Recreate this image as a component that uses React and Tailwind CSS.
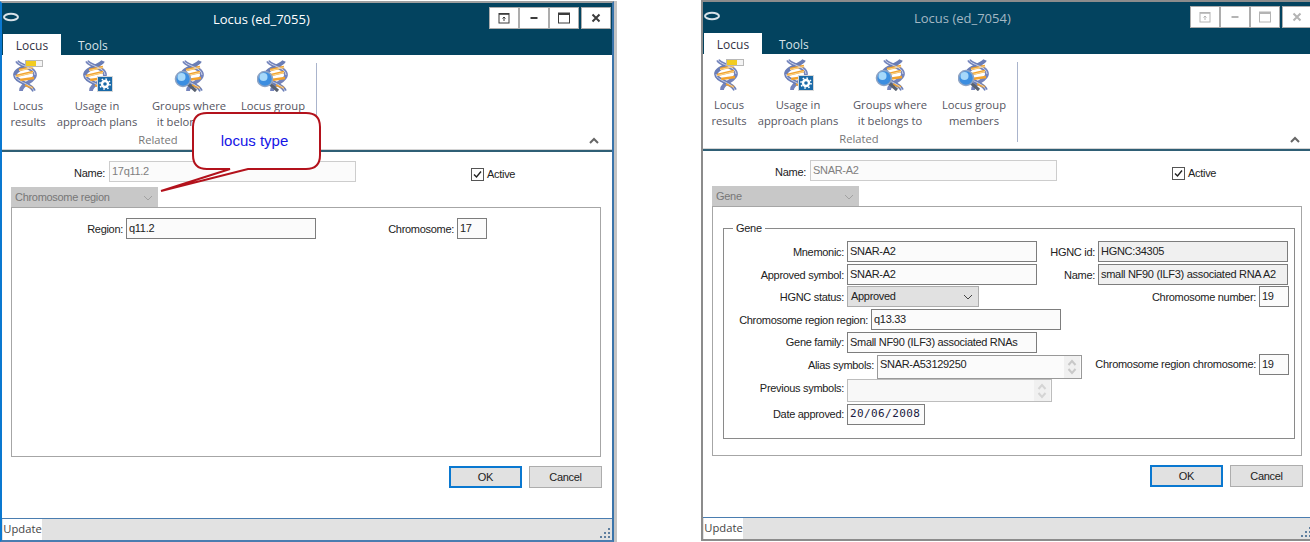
import React from 'react';

const RIBBON_FONT = "font-['Open_Sans',sans-serif]";
const FORM_FONT = "font-['Liberation_Sans',sans-serif] tracking-[-0.3px]";

function Helix({ x = 0 }) {
  return (
    <g transform={`translate(${x} 0)`}>
      <path d="M5 1 C7 6 23 7 23 15 C23 22 9 23 9 31" stroke="#7484bc" strokeWidth="3.8" fill="none" />
      <path d="M21 1 C19 6 3 8 3 15 C3 22 19 23 22 31" stroke="#6a7db6" strokeWidth="3.8" fill="none" />
      <path d="M7 10 L21 7 M4 16 L21 12 M8 20 L22 18 M13 25 L21 28" stroke="#f2a22e" strokeWidth="2.4" fill="none" />
      <path d="M7 10.5 L21 7.5 M4 16.5 L21 12.5" stroke="#fbe4aa" strokeWidth="0.8" fill="none" />
      <path d="M5 1 C7 6 23 7 23 15" stroke="#ccd4ea" strokeWidth="1" fill="none" />
      <path d="M3 15 C3 22 19 23 22 31" stroke="#c6d0e8" strokeWidth="1" fill="none" />
    </g>
  );
}

function Lens({ x }) {
  return (
    <g>
      <path d={`M${x + 5} 24 L${x + 13} 31`} stroke="#5a6270" strokeWidth="3.2" />
      <circle cx={x} cy="19" r="7.5" fill="#3c8ee0" stroke="#8fa4c4" strokeWidth="1.6" />
      <circle cx={x - 1.5} cy="17" r="4" fill="#a6d8fa" />
    </g>
  );
}

function RibbonIcon({ kind }) {
  return (
    <svg width="32" height="32" viewBox="0 0 32 32" className="shrink-0">
      {kind === 'results' && (
        <>
          <Helix x={0} />
          <rect x="13.5" y="0.5" width="17" height="6" fill="#f4f4f4" stroke="#b8b8b8" />
          <rect x="14" y="1" width="10" height="5" fill="#f2cc20" />
        </>
      )}
      {kind === 'usage' && (
        <>
          <Helix x={1} />
          <rect x="16" y="16" width="16" height="16" fill="#d8d8d8" />
          <rect x="17" y="17" width="14" height="14" fill="#1a6aa8" />
          <circle cx="24" cy="24" r="3" fill="none" stroke="#fff" strokeWidth="2.4" />
          <circle cx="24" cy="24" r="5" fill="none" stroke="#fff" strokeWidth="1.6" strokeDasharray="1.6 2.3" />
        </>
      )}
      {kind === 'groups' && (
        <>
          <Helix x={6} />
          <Lens x={10} />
        </>
      )}
      {kind === 'members' && (
        <>
          <Helix x={6} />
          <Lens x={8} />
        </>
      )}
    </svg>
  );
}

function RibbonItem({ kind, lines, w, ml }) {
  return (
    <div className={`flex flex-col items-center ${w} ${ml}`}>
      <RibbonIcon kind={kind} />
      <div className="mt-[6px] text-center leading-[16px] whitespace-nowrap">
        <div>{lines[0]}</div>
        <div>{lines[1]}</div>
      </div>
    </div>
  );
}

function WinButton({ dim, children, ml = '' }) {
  return (
    <div className={`flex h-[22px] w-[30px] items-center justify-center border border-[#adadad] bg-white ${ml} ${dim ? 'text-[#b4b4b4]' : 'text-[#3c3c3c]'}`}>
      <svg width="12" height="12" viewBox="0 0 12 12" fill="none" stroke="currentColor">
        {children}
      </svg>
    </div>
  );
}

function TitleBar({ title, dim }) {
  return (
    <div className="h-[52px] shrink-0 bg-[#03435f]">
      <div className="flex h-[31px]">
        <svg width="16" height="10" viewBox="0 0 16 10" className="mt-[9px] ml-px">
          <ellipse cx="8" cy="5" rx="7" ry="3.2" fill="none" stroke="#d8e2e8" strokeWidth="2" />
        </svg>
        <div className={`ml-[194px] pt-[7px] text-[13px] leading-[18px] whitespace-nowrap ${RIBBON_FONT} ${dim ? 'text-[#a3b8c4]' : 'text-white'}`}>
          {title}
        </div>
        <div className="ml-auto mr-[1px] flex pt-[4px]">
          <WinButton dim={dim}>
            <rect x="1" y="1.5" width="10" height="9.5" />
            <path d="M1 2 H11" strokeWidth="1.6" />
            <path d="M6 9 V5 M4.5 6.5 L6 5 L7.5 6.5" />
          </WinButton>
          <WinButton dim={dim}>
            <path d="M2.5 6 H9.5" strokeWidth="2" />
          </WinButton>
          <WinButton dim={dim}>
            <rect x="0.5" y="1" width="11" height="10" />
            <path d="M0.5 2 H11.5" strokeWidth="2" />
          </WinButton>
          <WinButton dim={dim} ml="ml-[2px]">
            <path d="M2.5 2.5 L9.5 9.5 M9.5 2.5 L2.5 9.5" strokeWidth="2" />
          </WinButton>
        </div>
      </div>
      <div className={`ml-[1px] flex h-[21px] text-[12px] ${RIBBON_FONT}`}>
        <div className="flex w-[58px] items-center justify-center bg-white pt-[2px] text-[#334]">Locus</div>
        <div className="ml-[17px] flex items-center pt-[2px] text-[#d8e2e8]">Tools</div>
      </div>
    </div>
  );
}

function Ribbon() {
  return (
    <div className={`flex h-[95px] shrink-0 border-b border-[#d4d4d4] bg-white text-[11.2px] text-[#55555f] ${RIBBON_FONT}`}>
      <div className="flex w-[314px] flex-col pt-[5px]">
        <div className="flex">
          <RibbonItem kind="results" lines={['Locus', 'results']} w="w-[50px]" ml="ml-px" />
          <RibbonItem kind="usage" lines={['Usage in', 'approach plans']} w="w-[84px]" ml="ml-[2px]" />
          <RibbonItem kind="groups" lines={['Groups where', 'it belongs to']} w="w-[80px]" ml="ml-[10px]" />
          <RibbonItem kind="members" lines={['Locus group', 'members']} w="w-[76px]" ml="ml-[6px]" />
        </div>
        <div className="mt-[2px] w-[312px] text-center leading-[16px] text-[#777]">Related</div>
      </div>
      <div className="mt-[8px] h-[80px] w-px bg-[#aab4cc]" />
      <svg width="10" height="7" viewBox="0 0 10 7" className="mt-auto mb-[5px] ml-auto mr-[13px]">
        <path d="M1 6 L5 2 L9 6" fill="none" stroke="#666" strokeWidth="2" />
      </svg>
    </div>
  );
}

function Field({ w, h = 'h-[21px]', bg = 'bg-[#fbfbfb]', border = 'border-[#7d7d7d]', color = 'text-[#222]', ml = '', children }) {
  return (
    <div className={`flex shrink-0 items-start overflow-hidden border px-[2px] pt-px leading-[16px] whitespace-nowrap ${w} ${h} ${bg} ${border} ${color} ${ml}`}>
      {children}
    </div>
  );
}

function Row({ label, labelW, mt, labelPad = 'pt-px', children }) {
  return (
    <div className={`flex items-center ${mt}`}>
      <div className={`shrink-0 pr-[3px] text-right whitespace-nowrap ${labelW} ${labelPad}`}>{label}</div>
      {children}
    </div>
  );
}

function Spinner({ dim }) {
  const stroke = dim ? '#d4d4d4' : '#c8c8c8';
  return (
    <div className="ml-auto mr-[-1px] mt-[-1px] flex h-[calc(100%+1px)] w-[16px] flex-col items-center justify-center gap-[2px] bg-[#f0f0f0]">
      <svg width="10" height="7" viewBox="0 0 10 7">
        <path d="M1.5 6 L5 2 L8.5 6" fill="none" stroke={stroke} strokeWidth="2" />
      </svg>
      <svg width="10" height="7" viewBox="0 0 10 7">
        <path d="M1.5 1 L5 5 L8.5 1" fill="none" stroke={stroke} strokeWidth="2" />
      </svg>
    </div>
  );
}

function FormHead({ name, typeName }) {
  return (
    <>
      <div className="flex pt-[9px]">
        <div className="w-[104px] pt-[4px] pr-[1px] text-right leading-[16px]">Name:</div>
        <Field w="w-[247px]" border="border-[#cdcdcd]" color="text-[#808080]" ml="ml-[3px]">{name}</Field>
        <div className="ml-[115px] mt-[5px] flex items-center">
          <div className="flex h-[13px] w-[13px] items-center justify-center border border-[#555] bg-white">
            <svg width="11" height="11" viewBox="0 0 11 11">
              <path d="M2 5.5 L4.5 8 L9 2.5" fill="none" stroke="#222" strokeWidth="1.4" />
            </svg>
          </div>
          <span className="ml-[3px] leading-[14px]">Active</span>
        </div>
      </div>
      <div className="ml-[9px] mt-[5px] flex h-[20px] w-[147px] items-center bg-[#c8c8c8] pl-[4px] pr-[4px] pt-px text-[#777]">
        {typeName}
        <svg width="10" height="6" viewBox="0 0 10 6" className="ml-auto mr-[1px]">
          <path d="M1 1 L5 5 L9 1" fill="none" stroke="#a2a2a2" strokeWidth="1" />
        </svg>
      </div>
    </>
  );
}

function Buttons() {
  return (
    <div className="mr-[10px] mt-[9px] flex justify-end">
      <div className="flex h-[22px] w-[73px] items-center justify-center border-2 border-[#0a78d0] bg-[#e1e1e1]">OK</div>
      <div className="ml-[7px] flex h-[22px] w-[73px] items-center justify-center border border-[#adadad] bg-[#e1e1e1]">Cancel</div>
    </div>
  );
}

function StatusBar() {
  return (
    <div className={`flex h-[22px] shrink-0 items-stretch border-t border-[#4a7db0] bg-[#e2e2e2] text-[11.2px] text-[#444] ${RIBBON_FONT}`}>
      <div className="ml-px flex w-[39px] items-center justify-center bg-white">Update</div>
      <svg width="12" height="11" viewBox="0 0 12 11" className="ml-auto mt-auto mb-px mr-px" fill="#5f7f9f">
        <rect x="9" y="0" width="2" height="2" />
        <rect x="5" y="4" width="2" height="2" />
        <rect x="9" y="4" width="2" height="2" />
        <rect x="1" y="8" width="2" height="2" />
        <rect x="5" y="8" width="2" height="2" />
        <rect x="9" y="8" width="2" height="2" />
      </svg>
    </div>
  );
}

function RegionPanel() {
  return (
    <div className="ml-[9px] flex h-[250px] w-[590px] items-start border border-[#a6a6a6] pt-[10px]">
      <div className="w-[114px] pt-[3px] pr-[3px] text-right leading-[16px]">Region:</div>
      <Field w="w-[190px]">q11.2</Field>
      <div className="w-[141px] pt-[3px] pr-[3px] text-right leading-[16px]">Chromosome:</div>
      <Field w="w-[30px]">17</Field>
    </div>
  );
}

function GenePanel() {
  return (
    <div className="ml-[9px] h-[250px] w-[590px] border border-[#a6a6a6] pt-[14px] pl-[10px]">
      <fieldset className="h-[218px] w-[572px] border border-[#8a8a8a]">
        <legend className="ml-[9px] px-[3px] leading-[14px]">Gene</legend>
        <div className="flex justify-between pt-[6px] pr-[5px]">
          {/* the left rows run past this width, under the right column's labels */}
          <div className="flex w-[300px] shrink-0 flex-col">
            <Row label="Mnemonic:" labelW="w-[123px]"><Field w="w-[190px]">SNAR-A2</Field></Row>
            <Row label="Approved symbol:" labelW="w-[123px]" mt="mt-[2px]"><Field w="w-[190px]">SNAR-A2</Field></Row>
            <Row label="HGNC status:" labelW="w-[123px]" mt="mt-px">
              <div className="flex h-[21px] w-[132px] shrink-0 items-center border border-[#adadad] bg-[#e1e1e1] px-[3px]">
                Approved
                <svg width="10" height="6" viewBox="0 0 10 6" className="ml-auto mr-[2px]">
                  <path d="M1 1 L5 5 L9 1" fill="none" stroke="#444" strokeWidth="1" />
                </svg>
              </div>
            </Row>
            <Row label="Chromosome region region:" labelW="w-[147px]" mt="mt-[2px]"><Field w="w-[190px]">q13.33</Field></Row>
            <Row label="Gene family:" labelW="w-[123px]" mt="mt-[2px]" labelPad=""><Field w="w-[190px]">Small NF90 (ILF3) associated RNAs</Field></Row>
            <Row label="Alias symbols:" labelW="w-[153px]" mt="mt-[2px]" labelPad="pb-[3px]">
              <Field w="w-[205px]" h="h-[24px]" border="border-[#999]"><span className="-mt-px">SNAR-A53129250</span><Spinner /></Field>
            </Row>
            <Row label="Previous symbols:" labelW="w-[123px]" labelPad="pb-[4px]">
              <Field w="w-[205px]" h="h-[23px]" bg="bg-[#f8f8f8]" border="border-[#bdbdbd]"><Spinner dim /></Field>
            </Row>
            <Row label="Date approved:" labelW="w-[123px]" mt="mt-[2px]" labelPad="pb-px">
              <Field w="w-[78px]" color="text-[#1a1a40]">
                <span className="font-['DejaVu_Sans_Mono',monospace] text-[11px] tracking-[0.4px]">20/06/2008</span>
              </Field>
            </Row>
          </div>
          <div className="flex flex-col items-end">
            <div className="mr-px flex items-center whitespace-nowrap">
              <span className="mr-[3px] pt-px">HGNC id:</span>
              <Field w="w-[190px]" bg="bg-[#f0f0f0]">HGNC:34305</Field>
            </div>
            <div className="mr-px mt-[2px] flex items-center whitespace-nowrap">
              <span className="mr-[3px] pt-px">Name:</span>
              <Field w="w-[190px]" bg="bg-[#f0f0f0]">small NF90 (ILF3) associated RNA A2</Field>
            </div>
            <div className="mt-px flex items-center whitespace-nowrap">
              <span className="mr-[3px] pt-px">Chromosome number:</span>
              <Field w="w-[30px]">19</Field>
            </div>
            <div className="mt-[47px] flex items-center whitespace-nowrap">
              <span className="mr-[3px] pb-px">Chromosome region chromosome:</span>
              <Field w="w-[30px]">19</Field>
            </div>
          </div>
        </div>
      </fieldset>
    </div>
  );
}

function Callout() {
  return (
    <div className="absolute left-[158px] top-[107px] z-10 h-[84px] w-[164px]">
      <svg width="164" height="84" viewBox="0 0 164 84" className="absolute inset-0">
        <path
          d="M47 3 H146 Q160 3 160 17 V45 Q160 59 146 59 H88 L1 81 L70 59 H47 Q33 59 33 45 V17 Q33 3 47 3 Z"
          fill="#fff"
          stroke="#b3121c"
          strokeWidth="2"
        />
      </svg>
      <div className="absolute left-[31px] top-[21px] w-[127px] text-center font-['Liberation_Sans',sans-serif] text-[15px] leading-[20px] text-[#1414e6]">
        locus type
      </div>
    </div>
  );
}

function LocusWindow({ title, dim, pos, borderColor, children, typeName, name, callout }) {
  return (
    <div className={`absolute flex h-[541px] w-[614px] flex-col border-2 bg-white shadow-[3px_0_0_#c4c4c4] ${pos} ${borderColor}`}>
      <TitleBar title={title} dim={dim} />
      <Ribbon />
      <div className={`min-h-0 flex-1 border-t-2 border-[#2f5f75] text-[11px] text-[#222] ${FORM_FONT}`}>
        <FormHead name={name} typeName={typeName} />
        {children}
        <Buttons />
      </div>
      <StatusBar />
      {callout && <Callout />}
    </div>
  );
}

export default function App() {
  return (
    <div className="relative h-[542px] w-[1310px] overflow-hidden bg-white">
      <LocusWindow
        title="Locus (ed_7055)"
        pos="left-0 top-px"
        borderColor="border-l-[#0a78d0] border-t-[#a0a0a0] border-r-[#3a74aa] border-b-[#4a7db0]"
        name="17q11.2"
        typeName="Chromosome region"
        callout
      >
        <RegionPanel />
      </LocusWindow>
      <LocusWindow
        title="Locus (ed_7054)"
        dim
        pos="left-[701px] top-0"
        borderColor="border-[#8c8c8c]"
        name="SNAR-A2"
        typeName="Gene"
      >
        <GenePanel />
      </LocusWindow>
    </div>
  );
}
